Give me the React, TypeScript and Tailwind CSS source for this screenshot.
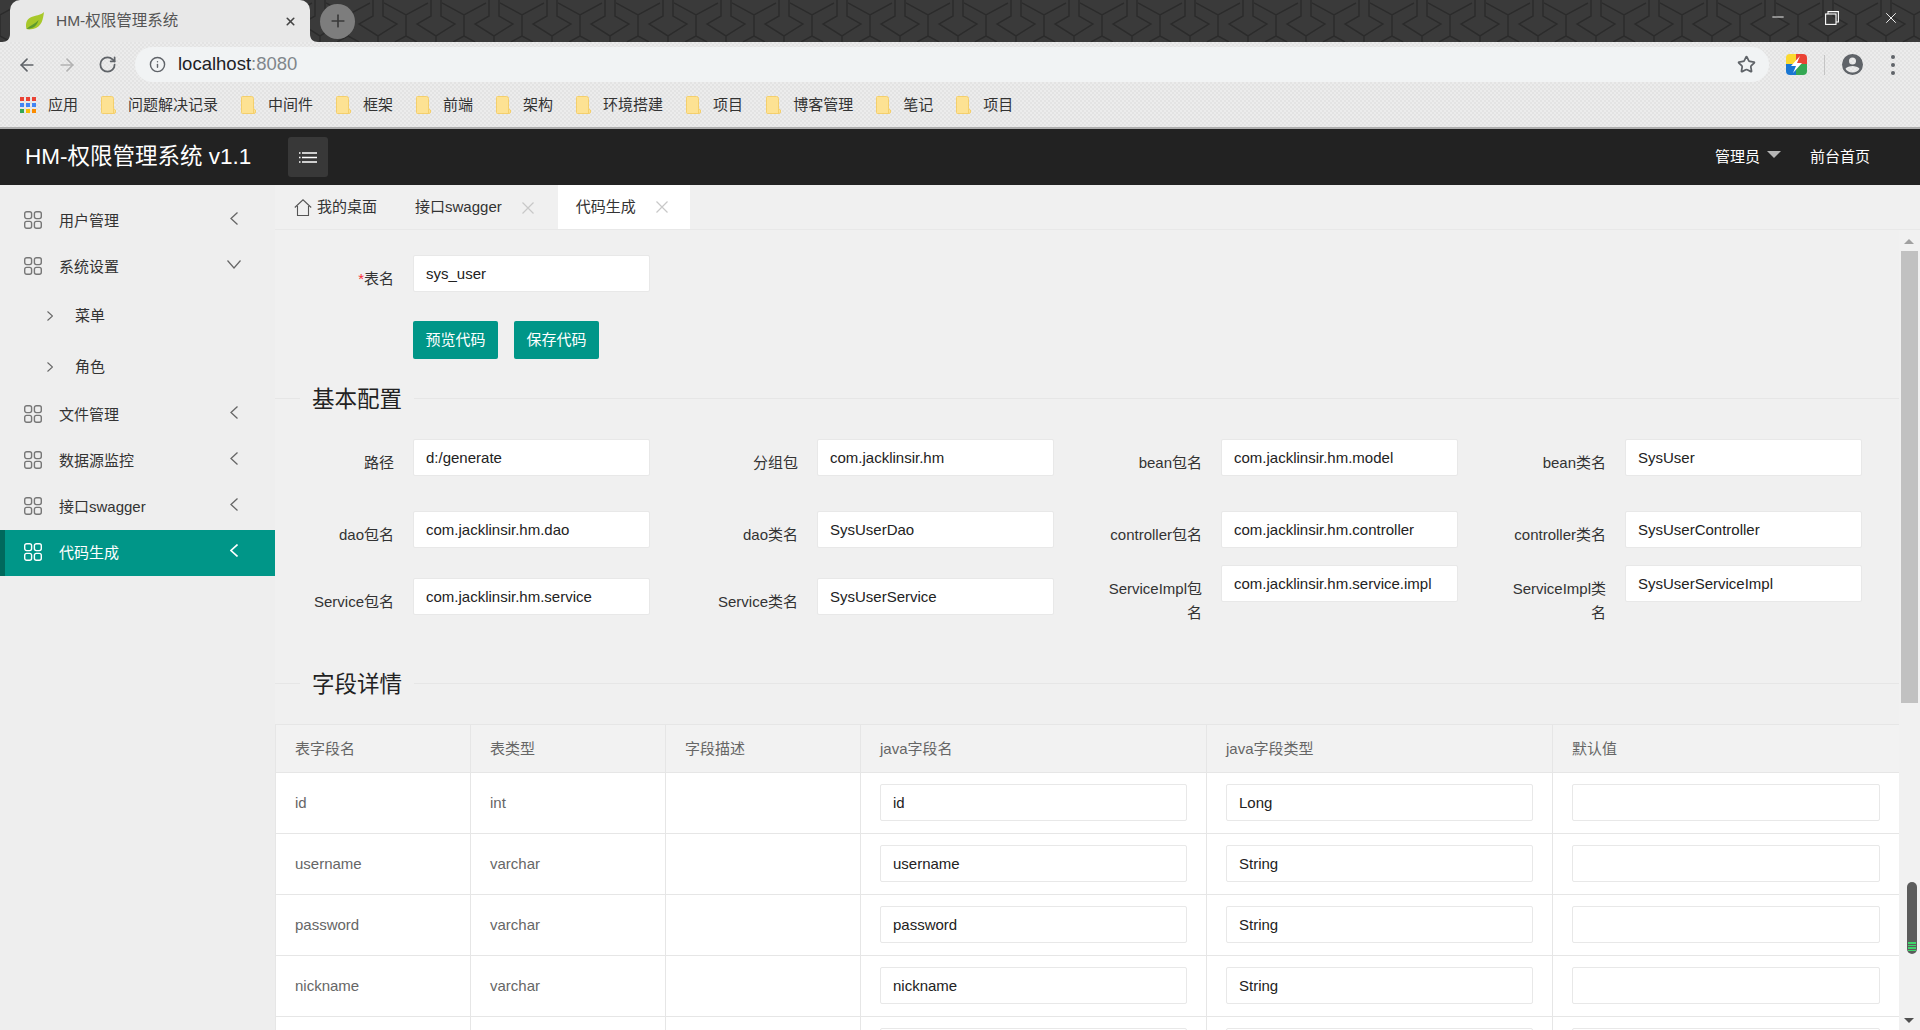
import { ArrowLeft, ArrowRight, Info, Minus, Plus, RotateCw, Star, X } from "lucide-react";

const bookmarks = ["问题解决记录", "中间件", "框架", "前端", "架构", "环境搭建", "项目", "博客管理", "笔记", "项目"];

const fieldRows = [
  [
    { label: "路径", value: "d:/generate" },
    { label: "分组包", value: "com.jacklinsir.hm" },
    { label: "bean包名", value: "com.jacklinsir.hm.model" },
    { label: "bean类名", value: "SysUser" },
  ],
  [
    { label: "dao包名", value: "com.jacklinsir.hm.dao" },
    { label: "dao类名", value: "SysUserDao" },
    { label: "controller包名", value: "com.jacklinsir.hm.controller" },
    { label: "controller类名", value: "SysUserController" },
  ],
];

const columns = [
  { name: "id", type: "int", javaName: "id", javaType: "Long" },
  { name: "username", type: "varchar", javaName: "username", javaType: "String" },
  { name: "password", type: "varchar", javaName: "password", javaType: "String" },
  { name: "nickname", type: "varchar", javaName: "nickname", javaType: "String" },
  { name: "", type: "", javaName: "", javaType: "" },
];

function AppGridIcon({ className }: { className: string }) {
  return (
    <svg viewBox="0 0 18 18" className={`h-[18px] w-[18px] shrink-0 ${className}`} fill="none" stroke="currentColor" strokeWidth="1.4">
      <rect x="0.7" y="0.7" width="6.9" height="6.9" rx="2" />
      <rect x="10.4" y="0.7" width="6.9" height="6.9" rx="2" />
      <rect x="0.7" y="10.4" width="6.9" height="6.9" rx="2" />
      <rect x="10.4" y="10.4" width="6.9" height="6.9" rx="2" />
    </svg>
  );
}

function FolderIcon() {
  return (
    <svg viewBox="0 0 15 18" className="h-[18px] w-[15px] shrink-0">
      <path d="M1.5.5h9a2 2 0 0 1 2 2v10l2 1.5v2a1.5 1.5 0 0 1-1.5 1.5H1.5A1 1 0 0 1 .5 16.5V1.5a1 1 0 0 1 1-1z" fill="#fde293" stroke="#f4cf6c" />
      <path d="M12.5 12.5v5" stroke="#f4cf6c" fill="none" />
    </svg>
  );
}

function CloseIcon() {
  return (
    <svg viewBox="0 0 12 12" className="ml-[20px] h-[12px] w-[12px] shrink-0 text-[#c8c8c8]" fill="none" stroke="currentColor" strokeWidth="1.2">
      <path d="M.5.5l11 11M11.5.5l-11 11" />
    </svg>
  );
}

function NavItem({ label, active, open }: { label: string; active?: boolean; open?: boolean }) {
  return (
    <div className={`flex h-[46px] items-center pb-[2px] ${active ? "border-l-[5px] border-[#00695c] bg-[#009688] pl-[19px] text-white" : "pl-[24px] text-[#333]"}`}>
      <AppGridIcon className={active ? "text-white" : "text-[#777]"} />
      <span className="ml-[17px] w-[171px] shrink-0 text-[15px] leading-none">{label}</span>
      {open ? (
        <svg viewBox="0 0 14 9" className="-mt-[3px] -ml-[3px] h-[9px] w-[14px] text-[#666]" fill="none" stroke="currentColor" strokeWidth="1.2">
          <path d="M.5.5L7 8l6.5-7.5" />
        </svg>
      ) : (
        <svg viewBox="0 0 8 13" className={`-mt-[3px] h-[13px] w-[8px] ${active ? "text-white" : "text-[#666]"}`} fill="none" stroke="currentColor" strokeWidth={active ? 1.6 : 1.3}>
          <path d="M7.5.5L1 6.5l6.5 6" />
        </svg>
      )}
    </div>
  );
}

function SubItem({ label }: { label: string }) {
  return (
    <div className="flex h-[51px] items-center pl-[47px] text-[#333]">
      <svg viewBox="0 0 6 10" className="h-[10px] w-[6px] text-[#666]" fill="none" stroke="currentColor" strokeWidth="1.1">
        <path d="M.5.5L5.5 5l-5 4.500" />
      </svg>
      <span className="ml-[22px] text-[15px] leading-none">{label}</span>
    </div>
  );
}

function TextInput({ value, className }: { value: string; className: string }) {
  return (
    <input
      readOnly
      value={value}
      className={`rounded-[2px] border border-[#e8e8e8] bg-white px-[12px] text-[15px] text-[#222] outline-none ${className}`}
    />
  );
}

function Field({ label, value, className = "" }: { label: string; value: string; className?: string }) {
  return (
    <div className={`flex w-[404px] shrink-0 items-start ${className}`}>
      <label className="ml-[19px] w-[100px] pt-[12px] text-right text-[15px] leading-[24px] text-[#333]">{label}</label>
      <TextInput value={value} className="ml-[19px] h-[37px] w-[237px]" />
    </div>
  );
}

function SectionTitle({ title, className }: { title: string; className: string }) {
  return (
    <div className={`flex h-[30px] items-center ${className}`}>
      <div className="h-px w-[25px] bg-[#e6e6e6]" />
      <span className="px-[12px] pt-[4px] text-[22.5px] leading-none text-[#222]">{title}</span>
      <div className="h-px flex-1 bg-[#e6e6e6]" />
    </div>
  );
}

export default function App() {
  return (
    <div className="flex h-[1030px] w-[1920px] flex-col overflow-hidden bg-[#f0f0f0] [font-family:'Liberation_Sans','Noto_Sans_CJK_SC',sans-serif]">
      {/* browser title bar */}
      <div className="relative flex h-[42px] shrink-0 items-center bg-[#3a3a3a]">
        <svg className="absolute inset-0 h-full w-full" aria-hidden="true">
          <defs>
            <pattern id="chrome-theme" x="-22" width="58" height="42" patternUnits="userSpaceOnUse">
              <path
                d="M0 3L22 15L44 3M22 15V36M22 36L33 42M22 36L11 42M47 0V16L33 24L52 36L71 24L57 16V0M52 36V42M-1 0V16L13 24L-6 36M0 32L-6 36"
                fill="none"
                stroke="#2b2b2b"
                strokeWidth="1.5"
              />
            </pattern>
          </defs>
          <rect width="100%" height="100%" fill="url(#chrome-theme)" />
        </svg>
        <div className="relative ml-[10px] flex h-[42px] w-[300px] items-center rounded-t-[10px] bg-[#e8e8e8] pl-[15px]">
          <svg viewBox="0 0 20 20" className="h-[20px] w-[20px] shrink-0">
            <path d="M19 1c-1 7-2 15-11 17-3 .5-5 .5-6.5 0C0 12 2 7 8 5.500 13 4 16 4 19 1z" fill="#a8c82a" />
            <path d="M1.5 18c4-4 9-5 12-9-1 5-5 9-12 9z" fill="#5d9a2e" />
          </svg>
          <span className="ml-[11px] text-[15.5px] leading-none text-[#555]">HM-权限管理系统</span>
          <X className="absolute top-[15px] left-[274px] h-[13px] w-[13px] text-[#444]" strokeWidth={3} />
          <svg viewBox="0 0 8 8" className="absolute bottom-0 -left-[8px] h-[8px] w-[8px]"><path d="M8 0v8H0c5 0 8-3 8-8z" fill="#e8e8e8" /></svg>
          <svg viewBox="0 0 8 8" className="absolute -right-[8px] bottom-0 h-[8px] w-[8px]"><path d="M0 0v8h8C3 8 0 5 0 0z" fill="#e8e8e8" /></svg>
        </div>
        <div className="relative ml-[10px] flex h-[35px] w-[35px] items-center justify-center rounded-full bg-[#7d7d7d]">
          <Plus className="h-[20px] w-[20px] text-[#3a3a3a]" strokeWidth={2} />
        </div>
        <div className="relative ml-auto flex items-center text-white">
          <Minus className="mr-[38px] -mt-[9px] h-[18px] w-[18px]" strokeWidth={1.2} />
          <svg viewBox="0 0 14 14" className="mr-[43px] -mt-[6px] h-[14px] w-[14px]" fill="none" stroke="currentColor" strokeWidth="1.1">
            <rect x="0.6" y="3" width="10.4" height="10.4" />
            <path d="M3 3V.6h10.4V11H11" />
          </svg>
          <X className="mr-[20px] -mt-[6px] h-[18px] w-[18px]" strokeWidth={1.2} />
        </div>
      </div>

      {/* browser toolbar */}
      <div className="h-[87px] shrink-0 border-b-2 border-[#adadad] bg-[repeating-conic-gradient(#e3e3e3_0%_25%,#ececec_0%_50%)] bg-[length:4px_4px]">
        <div className="mt-[5px] flex h-[35px] items-center">
          <div className="ml-[7px] flex w-[40px] justify-center"><ArrowLeft className="h-[20px] w-[20px] text-[#5f6368]" strokeWidth={2} /></div>
          <div className="flex w-[40px] justify-center"><ArrowRight className="h-[20px] w-[20px] text-[#b2b2b2]" strokeWidth={2} /></div>
          <div className="flex w-[40px] justify-center"><RotateCw className="h-[19px] w-[19px] text-[#5f6368]" strokeWidth={2.2} /></div>
          <div className="ml-[8px] flex h-[35px] w-[1634px] items-center rounded-full bg-[#f1f3f4] pl-[14px]">
            <Info className="h-[17px] w-[17px] text-[#5f6368]" strokeWidth={2} />
            <span className="ml-[12px] text-[18.5px] leading-none text-[#202124]">localhost<span className="text-[#80868b]">:8080</span></span>
            <Star className="mr-[13px] ml-auto h-[19px] w-[19px] text-[#5f6368]" strokeWidth={2.2} />
          </div>
          <svg viewBox="0 0 21 21" className="ml-[17px] h-[21px] w-[21px]">
            <clipPath id="ext-clip"><rect width="21" height="21" rx="4" /></clipPath>
            <g clipPath="url(#ext-clip)">
              <rect width="11" height="11" fill="#fbd92f" />
              <rect x="10" width="11" height="11" fill="#ea4335" />
              <rect y="10" width="11" height="11" fill="#1976d2" />
              <rect x="10" y="10" width="11" height="11" fill="#34a853" />
              <path d="M14 2L5 12h5l-3 7 9-10h-5z" fill="#fff" />
            </g>
          </svg>
          <div className="ml-[17px] h-[20px] w-px bg-[#c4c4c4]" />
          <svg viewBox="0 0 21 21" className="ml-[17px] h-[21px] w-[21px]" fill="#5f6368">
            <path d="M10.5 0a10.5 10.5 0 1 0 0 21 10.5 10.5 0 0 0 0-21zm0 3.5a3.5 3.5 0 1 1 0 7 3.5 3.5 0 0 1 0-7zm0 15a8 8 0 0 1-7-3.800c1.200-2 4.600-2.800 7-2.800s5.800.8 7 2.800a8 8 0 0 1-7 3.800z" fillRule="evenodd" />
          </svg>
          <div className="ml-[28px] flex flex-col gap-[4px]">
            <div className="h-[4px] w-[4px] rounded-full bg-[#5f6368]" />
            <div className="h-[4px] w-[4px] rounded-full bg-[#5f6368]" />
            <div className="h-[4px] w-[4px] rounded-full bg-[#5f6368]" />
          </div>
        </div>
        <div className="flex h-[45px] items-center pt-[1px] pl-[20px] text-[15px] text-[#333]">
          <div className="grid h-[16px] w-[16px] grid-cols-3 gap-[2px]">
            <div className="bg-[#ea4335]" /><div className="bg-[#ea4335]" /><div className="bg-[#ea4335]" />
            <div className="bg-[#4285f4]" /><div className="bg-[#4285f4]" /><div className="bg-[#4285f4]" />
            <div className="bg-[#34a853]" /><div className="bg-[#fbbc05]" /><div className="bg-[#fb8c00]" />
          </div>
          <span className="mr-[23px] ml-[12px]">应用</span>
          {bookmarks.map((name, i) => (
            <div key={i} className="mr-[23px] flex items-center">
              <FolderIcon />
              <span className="ml-[12px]">{name}</span>
            </div>
          ))}
        </div>
      </div>

      {/* app header */}
      <header className="flex h-[56px] shrink-0 items-center bg-[#222] pl-[25px] text-white">
        <div className="w-[263px] text-[22.5px] leading-none">HM-权限管理系统 v1.1</div>
        <div className="flex h-[40px] w-[40px] items-center justify-center rounded-[3px] bg-[#383838]">
          <svg viewBox="0 0 18 11" className="h-[11px] w-[18px]" fill="none" stroke="#fff" strokeWidth="1.4">
            <path d="M3 1h15M3 5.500h15M3 10h15M0 1h1.500M0 5.500h1.500M0 10h1.500" />
          </svg>
        </div>
        <span className="ml-auto text-[15px]">管理员</span>
        <div className="-mt-[6px] ml-[7px] h-0 w-0 border-x-[7px] border-t-[7px] border-x-transparent border-t-[#b5b5b5]" />
        <span className="mr-[50px] ml-[29px] text-[15px]">前台首页</span>
      </header>

      <div className="flex min-h-0 flex-1">
        {/* sidebar */}
        <aside className="w-[275px] shrink-0 bg-[#eeeeee] pt-[13px]">
          <NavItem label="用户管理" />
          <NavItem label="系统设置" open />
          <SubItem label="菜单" />
          <SubItem label="角色" />
          <NavItem label="文件管理" />
          <NavItem label="数据源监控" />
          <NavItem label="接口swagger" />
          <NavItem label="代码生成" active />
        </aside>

        <main className="flex min-w-0 flex-1 flex-col">
          {/* tabs */}
          <div className="flex h-[45px] shrink-0 items-end border-b border-[#e8e8e8] text-[15px] text-[#333]">
            <div className="ml-[19px] flex h-[43px] items-center">
              <svg viewBox="0 0 18 17" className="h-[17px] w-[18px] shrink-0 text-[#555]" fill="none" stroke="currentColor" strokeWidth="1.1">
                <path d="M.8 8.500L9 .8l8.200 7.700M3.500 7v9.500h11V7" />
              </svg>
              <span className="ml-[5px]">我的桌面</span>
              <span className="ml-[38px]">接口swagger</span>
              <CloseIcon />
            </div>
            <div className="ml-[24px] flex h-[44px] w-[132px] items-center bg-white pl-[18px]">
              <span>代码生成</span>
              <CloseIcon />
            </div>
          </div>

          <div className="flex min-h-0 flex-1">
            {/* form pane */}
            <div className="min-w-0 flex-1 overflow-hidden">
              <div className="flex pt-[25px]">
                <label className="ml-[19px] w-[100px] pt-[12px] text-right text-[15px] leading-[24px] text-[#333]">
                  <span className="text-red-500">*</span>表名
                </label>
                <TextInput value="sys_user" className="ml-[19px] h-[37px] w-[237px]" />
              </div>
              <div className="mt-[29px] ml-[138px] flex gap-[16px]">
                <button type="button" className="h-[38px] w-[85px] rounded-[2px] bg-[#009688] pt-[1px] text-[15px] text-white">预览代码</button>
                <button type="button" className="h-[38px] w-[85px] rounded-[2px] bg-[#009688] pt-[1px] text-[15px] text-white">保存代码</button>
              </div>

              <SectionTitle title="基本配置" className="mt-[24px]" />

              <div className="mt-[26px] flex">
                {fieldRows[0].map((f) => <Field key={f.label} label={f.label} value={f.value} />)}
              </div>
              <div className="mt-[35px] flex">
                {fieldRows[1].map((f) => <Field key={f.label} label={f.label} value={f.value} />)}
              </div>
              <div className="mt-[17px] flex h-[59px] items-start">
                <Field label="Service包名" value="com.jacklinsir.hm.service" className="mt-[13px]" />
                <Field label="Service类名" value="SysUserService" className="mt-[13px]" />
                <Field label="ServiceImpl包名" value="com.jacklinsir.hm.service.impl" />
                <Field label="ServiceImpl类名" value="SysUserServiceImpl" />
              </div>

              <SectionTitle title="字段详情" className="mt-[44px]" />

              <table className="mt-[26px] w-[1624px] table-fixed border-collapse text-[15px] text-[#666]">
                <colgroup>
                  <col className="w-[195px]" />
                  <col className="w-[195px]" />
                  <col className="w-[195px]" />
                  <col className="w-[346px]" />
                  <col className="w-[346px]" />
                  <col className="w-[347px]" />
                </colgroup>
                <thead>
                  <tr className="h-[48px] bg-[#f2f2f2]">
                    {["表字段名", "表类型", "字段描述", "java字段名", "java字段类型", "默认值"].map((h) => (
                      <th key={h} className="border border-[#e6e6e6] px-[19px] pt-[2px] text-left font-normal">{h}</th>
                    ))}
                  </tr>
                </thead>
                <tbody className="bg-white">
                  {columns.map((c, i) => (
                    <tr key={i} className="h-[61px]">
                      <td className="border border-[#e6e6e6] px-[19px]">{c.name}</td>
                      <td className="border border-[#e6e6e6] px-[19px]">{c.type}</td>
                      <td className="border border-[#e6e6e6] px-[19px]" />
                      <td className="border border-[#e6e6e6] px-[19px] pb-[2px]"><TextInput value={c.javaName} className="block h-[37px] w-full" /></td>
                      <td className="border border-[#e6e6e6] px-[19px] pb-[2px]"><TextInput value={c.javaType} className="block h-[37px] w-full" /></td>
                      <td className="border border-[#e6e6e6] px-[19px] pb-[2px]"><TextInput value="" className="block h-[37px] w-full" /></td>
                    </tr>
                  ))}
                </tbody>
              </table>
            </div>

            {/* scrollbar */}
            <div className="relative flex w-[21px] shrink-0 flex-col items-center bg-[#f1f1f1] pt-[9px] pr-[1px]">
              <div className="h-0 w-0 border-x-[5px] border-b-[5px] border-x-transparent border-b-[#a0a0a0]" />
              <div className="mt-[7px] h-[452px] w-[17px] bg-[#c1c1c1]" />
              <div className="mt-auto mb-[7px] h-0 w-0 border-x-[5px] border-t-[5px] border-x-transparent border-t-[#505050]" />
              <div className="absolute top-[652px] left-[8px] flex h-[72px] w-[10px] flex-col justify-end gap-[1px] rounded-full bg-[#5c5c5c] px-[1px] pb-[3px]">
                <div className="h-[2px] bg-[#3fd56b]" />
                <div className="h-px bg-[#3fd56b]" />
                <div className="h-[2px] bg-[#3fd56b]" />
                <div className="h-px bg-[#3fd56b]" />
              </div>
            </div>
          </div>
        </main>
      </div>
    </div>
  );
}
